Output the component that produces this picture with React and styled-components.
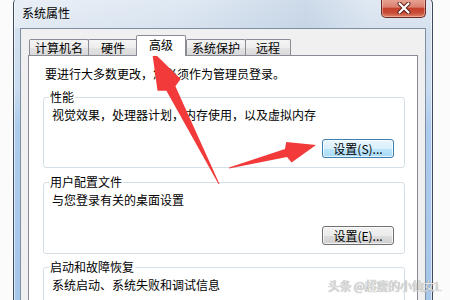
import React from "react";
import styled, { createGlobalStyle } from "styled-components";

const Global = createGlobalStyle`
  html, body {
    margin: 0;
    padding: 0;
    background: #fbfbfb;
  }
  body {
    font-family: "Noto Sans CJK SC", "Noto Sans", sans-serif;
    font-size: 12px;
    color: #000;
  }
`;

const Page = styled.div`
  position: relative;
  width: 450px;
  height: 300px;
  overflow: hidden;
  background: #fbfbfb;
`;

const Window = styled.div`
  box-sizing: border-box;
  width: 420px;
  height: 320px;
  margin: -3px 0 0 13px;
  border: 1px solid #3d4b5e;
  border-bottom: none;
  border-radius: 7px 7px 0 0;
  background: linear-gradient(
    to bottom,
    #dde7f2 0px,
    #d3dfed 30px,
    #c9dcf0 90px,
    #adcbec 130px,
    #a6c6ea 300px
  );
  box-shadow: inset 1px 0 0 rgba(255, 255, 255, 0.6),
    inset -1px 0 0 rgba(255, 255, 255, 0.6);
`;

const TitleBar = styled.div`
  display: flex;
  align-items: flex-start;
  height: 30px;
  padding: 0 6px 0 8px;
  background: linear-gradient(
    90deg,
    rgba(255, 255, 255, 0.35) 0%,
    rgba(255, 255, 255, 0.1) 40%,
    rgba(140, 165, 195, 0.18) 70%,
    rgba(255, 255, 255, 0.1) 85%
  );
`;

const Title = styled.div`
  margin-top: 8px;
  line-height: 14px;
  color: #000;
`;

const CloseBtn = styled.div`
  display: flex;
  align-items: center;
  justify-content: center;
  box-sizing: border-box;
  width: 45px;
  height: 19px;
  margin: 1px 0 0 auto;
  border: 1px solid #6b2a22;
  border-top: none;
  border-radius: 0 0 5px 5px;
  background: linear-gradient(
    to bottom,
    #e9a797 0%,
    #d9806f 45%,
    #c5412d 52%,
    #c64a35 75%,
    #de8468 100%
  );
  box-shadow: inset 0 0 0 1px rgba(255, 220, 210, 0.45);
`;

const Body = styled.div`
  height: 300px;
  margin: 0 6px;
  padding: 6px 7px 0;
  border: 1px solid #7f8fa3;
  border-bottom: none;
  background: #f0f0f0;
`;

const TabStrip = styled.div`
  display: flex;
  align-items: flex-end;
  padding-left: 1px;
`;

const Tab = styled.div`
  position: relative;
  z-index: ${(p) => (p.$active ? 1 : 0)};
  display: flex;
  align-items: center;
  justify-content: center;
  box-sizing: border-box;
  width: ${(p) => p.$w}px;
  height: ${(p) => (p.$active ? 21 : 16)}px;
  margin: ${(p) => (p.$active ? "0 0 -1px -1px" : "0 -1px 0 0")};
  padding-bottom: ${(p) => (p.$active ? 2 : 0)}px;
  border: 1px solid #898c95;
  border-bottom: none;
  border-radius: 2px 2px 0 0;
  background: ${(p) =>
    p.$active
      ? "#fff"
      : "linear-gradient(to bottom, #f5f5f5 0%, #ededed 50%, #e3e3e3 51%, #d9d9d9 100%)"};
  line-height: 14px;
  white-space: nowrap;
`;

const Panel = styled.div`
  height: 300px;
  padding: 11px 12px 0 14px;
  border: 1px solid #898c95;
  background: #fff;
`;

const Line = styled.div`
  margin-left: 2px;
  line-height: 14px;
`;

const Group = styled.fieldset`
  min-width: 0;
  margin: ${(p) => p.$mt}px 0 0;
  padding: 0 10px ${(p) => p.$pb}px 5px;
  border: 1px solid #d5dfe5;
  border-radius: 3px;
`;

const Legend = styled.legend`
  padding: 0 1px;
  line-height: 14px;
`;

const GroupText = styled.div`
  margin: 4px 0 0 3px;
  line-height: 14px;
`;

const ButtonRow = styled.div`
  display: flex;
  justify-content: flex-end;
  margin-top: ${(p) => p.$mt}px;
`;

const Button = styled.button`
  box-sizing: border-box;
  width: 72px;
  height: 19px;
  padding: 0;
  border: 1px solid ${(p) => (p.$focus ? "#3c7fb1" : "#707070")};
  border-radius: 3px;
  font-family: inherit;
  font-size: 12px;
  line-height: 17px;
  color: #000;
  background: ${(p) =>
    p.$focus
      ? "linear-gradient(to bottom, #eaf6fd 0%, #d9f0fc 50%, #bee6fd 51%, #a7d9f5 100%)"
      : "linear-gradient(to bottom, #f2f2f2 0%, #ebebeb 50%, #dddddd 51%, #cfcfcf 100%)"};
  box-shadow: inset 0 0 0 1px rgba(255, 255, 255, 0.7);
`;

const Arrows = styled.svg`
  position: absolute;
  left: 0;
  top: 0;
  pointer-events: none;
`;

const Watermark = styled.div`
  position: absolute;
  left: 328px;
  top: 279px;
  font-size: 12px;
  line-height: 14px;
  letter-spacing: -0.3px;
  color: #e4e4e4;
  text-shadow: 0 0 1px #6a6a6a;
  white-space: nowrap;
`;

const tabs = [
  { label: "计算机名", w: 60 },
  { label: "硬件", w: 50 },
  { label: "高级", w: 50, active: true },
  { label: "系统保护", w: 60 },
  { label: "远程", w: 46 },
];

export default function App() {
  return (
    <Page>
      <Global />
      <Window>
        <TitleBar>
          <Title>系统属性</Title>
          <CloseBtn>
            <svg width="16" height="12" viewBox="0 0 16 12">
              <path
                d="M3.5 1.5 L12.5 10.5 M12.5 1.5 L3.5 10.5"
                stroke="#5a1e18"
                strokeWidth="4"
                strokeLinecap="round"
              />
              <path
                d="M3.5 1.5 L12.5 10.5 M12.5 1.5 L3.5 10.5"
                stroke="#fff"
                strokeWidth="2.2"
                strokeLinecap="round"
              />
            </svg>
          </CloseBtn>
        </TitleBar>
        <Body>
          <TabStrip>
            {tabs.map((t) => (
              <Tab key={t.label} $w={t.w} $active={t.active}>
                {t.label}
              </Tab>
            ))}
          </TabStrip>
          <Panel>
            <Line>要进行大多数更改，您必须作为管理员登录。</Line>
            <Group $mt={9} $pb={9}>
              <Legend>性能</Legend>
              <GroupText>视觉效果，处理器计划，内存使用，以及虚拟内存</GroupText>
              <ButtonRow $mt={17}>
                <Button $focus>设置(S)...</Button>
              </ButtonRow>
            </Group>
            <Group $mt={7} $pb={8}>
              <Legend>用户配置文件</Legend>
              <GroupText>与您登录有关的桌面设置</GroupText>
              <ButtonRow $mt={19}>
                <Button>设置(E)...</Button>
              </ButtonRow>
            </Group>
            <Group $mt={6} $pb={40}>
              <Legend>启动和故障恢复</Legend>
              <GroupText>系统启动、系统失败和调试信息</GroupText>
            </Group>
          </Panel>
        </Body>
      </Window>
      <Arrows width="450" height="300" viewBox="0 0 450 300">
        <polygon
          fill="#f23a3a"
          points="219.5,184 175.4,86.3 180.7,79 152,51 157.5,90.8 166.4,90.8 218.5,184"
        />
        <polygon
          fill="#f23a3a"
          points="229,168.6 287,156.9 291.6,162.4 316,145 286.2,142 285,149.1 229,167.6"
        />
      </Arrows>
      <Watermark>头条 @超瘦的小仙女L</Watermark>
    </Page>
  );
}
